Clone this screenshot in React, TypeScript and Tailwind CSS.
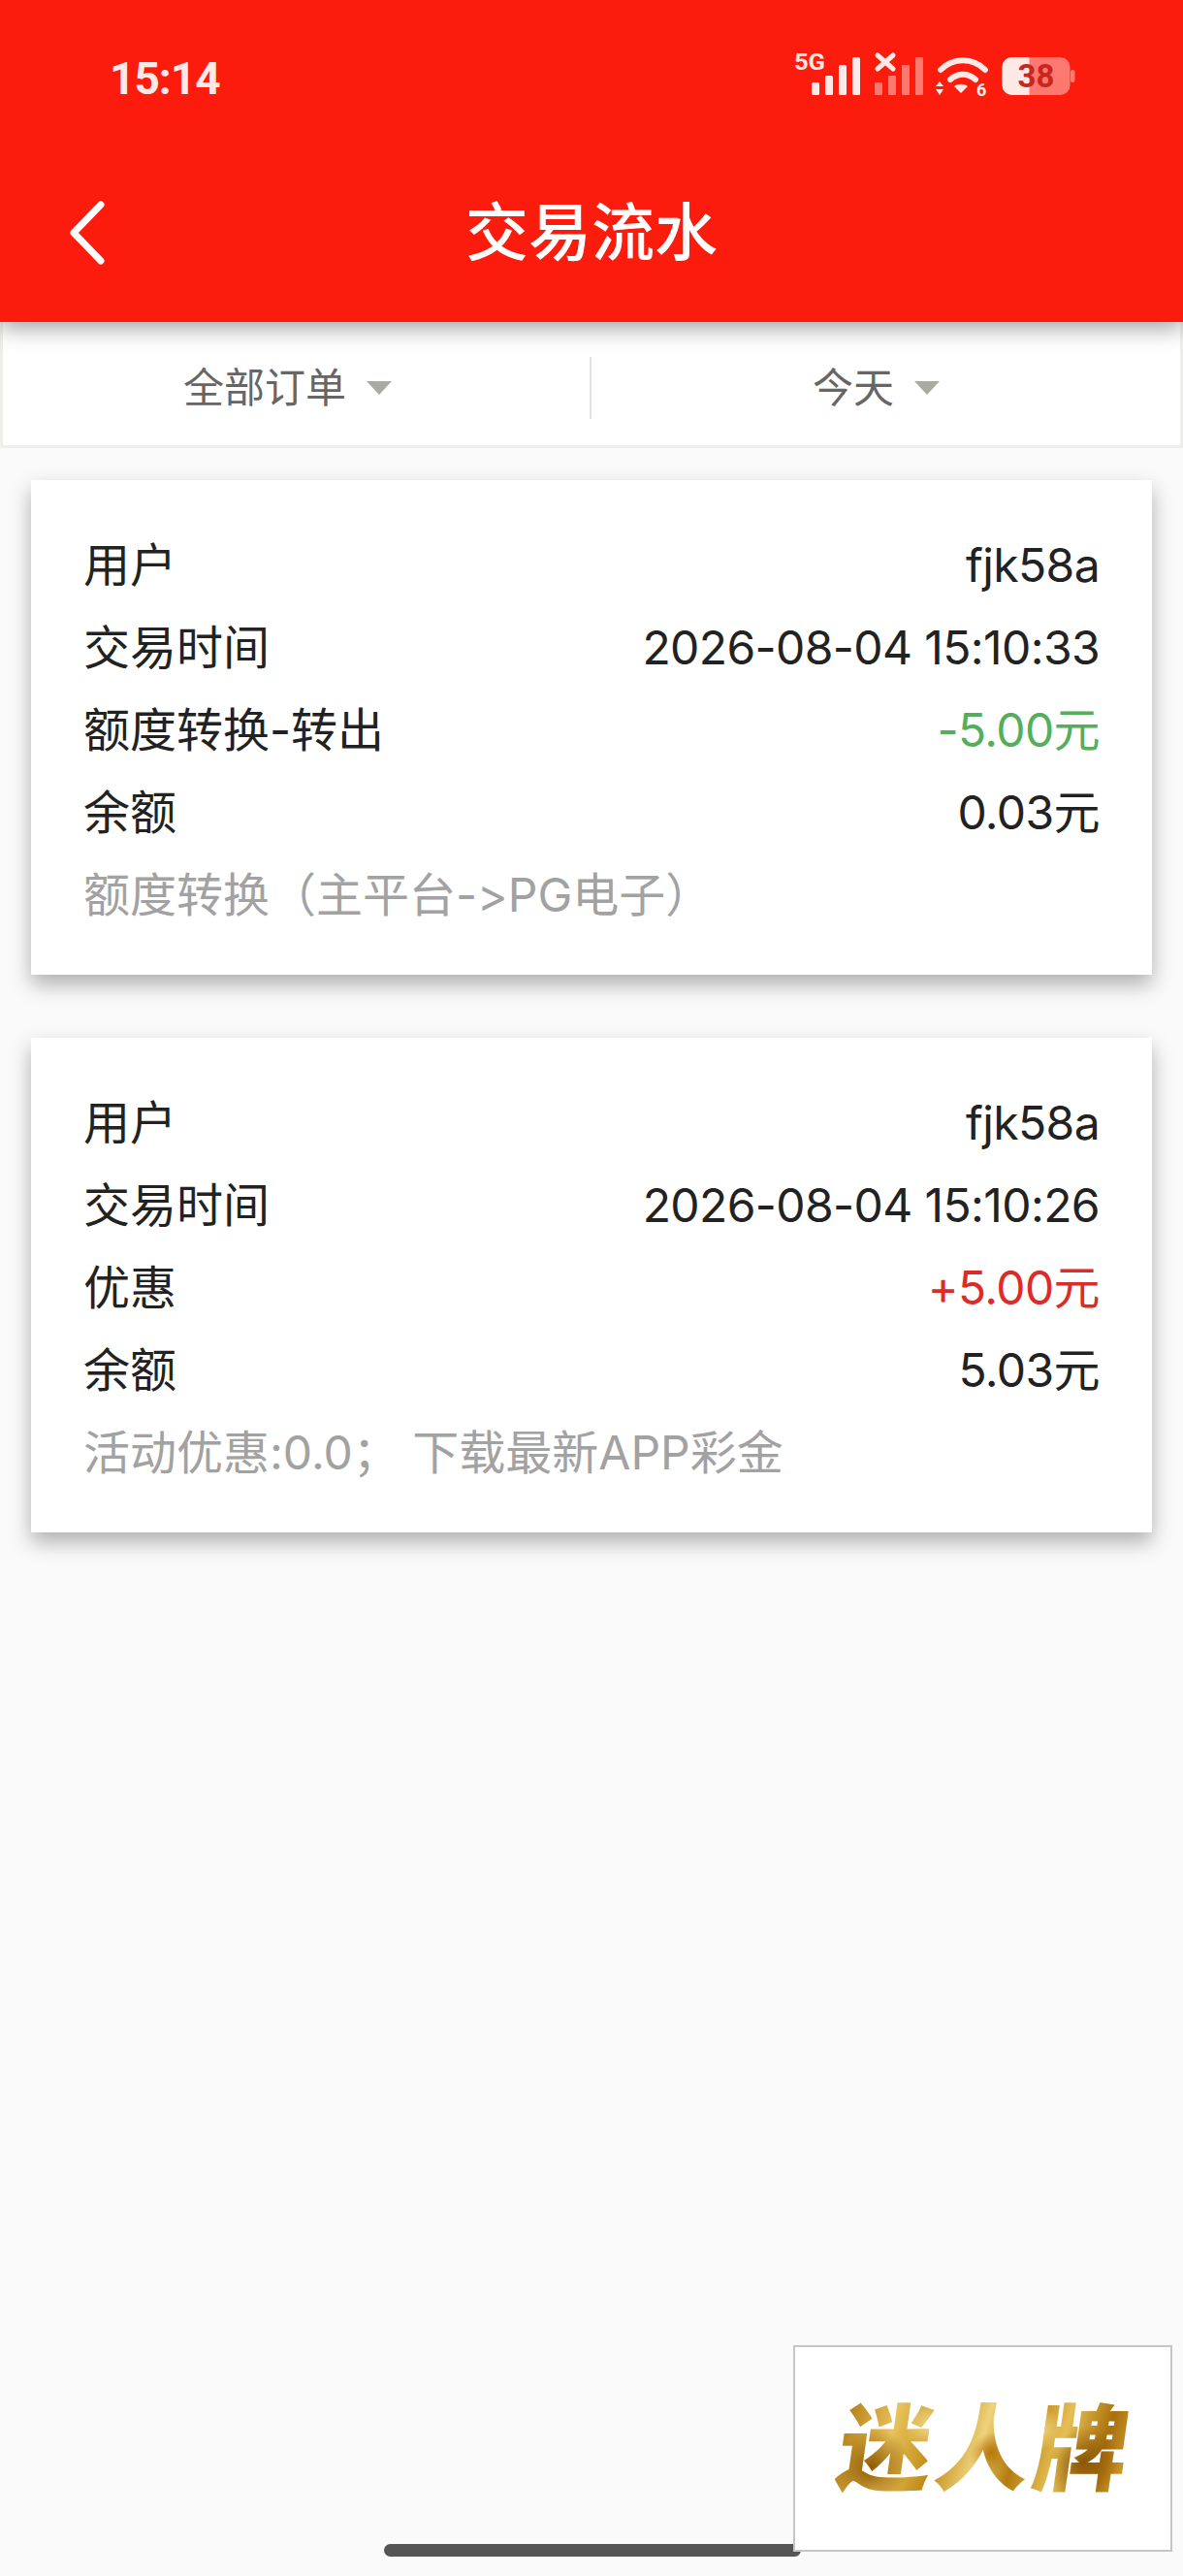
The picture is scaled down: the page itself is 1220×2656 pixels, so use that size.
type Row = { label: string; value: string; tone?: string };
type Txn = { rows: Row[]; note: string };

const txns: Txn[] = [
  {
    rows: [
      { label: '用户', value: 'fjk58a' },
      { label: '交易时间', value: '2026-08-04 15:10:33' },
      { label: '额度转换-转出', value: '-5.00元', tone: 'text-[#55ae5b]' },
      { label: '余额', value: '0.03元' },
    ],
    note: '额度转换（主平台->PG电子）',
  },
  {
    rows: [
      { label: '用户', value: 'fjk58a' },
      { label: '交易时间', value: '2026-08-04 15:10:26' },
      { label: '优惠', value: '+5.00元', tone: 'text-[#dc2c28]' },
      { label: '余额', value: '5.03元' },
    ],
    note: '活动优惠:0.0； 下载最新APP彩金',
  },
];

function StatusIcons() {
  return (
    <svg width="360" height="80" viewBox="0 0 360 80" fill="#ffe9e6">
      {/* 5G signal */}
      <text x="39" y="42" fontFamily="Roboto, sans-serif" fontWeight="700" fontSize="23" textLength="32" lengthAdjust="spacingAndGlyphs">5G</text>
      <rect x="57" y="55" width="8" height="13" rx="1.5" />
      <rect x="71" y="48" width="8" height="20" rx="1.5" />
      <rect x="85" y="37" width="8" height="31" rx="1.5" />
      <rect x="99" y="29" width="8" height="39" rx="1.5" />
      {/* second SIM, no service */}
      <g opacity="0.45">
        <rect x="122" y="55" width="8" height="13" rx="1" />
        <rect x="136" y="48" width="8" height="20" rx="1" />
        <rect x="150" y="37" width="8" height="31" rx="1" />
        <rect x="164" y="29" width="8" height="39" rx="1" />
      </g>
      <path d="M125 27l16 14M141 27l-16 14" stroke="#ffe9e6" strokeWidth="5" strokeLinecap="round" />
      {/* wifi 6 */}
      <g fill="none" stroke="#ffe9e6" strokeWidth="6" strokeLinecap="round">
        <path d="M190 42c13-13 33-13 46 0" />
        <path d="M200 52c8-7 18-7 26 0" />
      </g>
      <path d="M204 59c4-3 10-3 14 0l-7 7z" />
      <path d="M185 59l4-5 4 5zM185 62h8l-4 6z" />
      <text x="227" y="69" fontFamily="Roboto, sans-serif" fontWeight="700" fontSize="18">6</text>
      {/* battery */}
      <rect x="253.500" y="29" width="70" height="39" rx="10" fill="#ffe9e6" opacity="0.45" />
      <path d="M263.500 29h18v39h-18a10 10 0 0 1-10-10v-19a10 10 0 0 1 10-10z" />
      <rect x="324" y="42" width="4.500" height="13" rx="2" opacity="0.45" />
      <text x="288.500" y="60" textAnchor="middle" fontFamily="Roboto, sans-serif" fontWeight="700" fontSize="33" fill="#c8261e">38</text>
    </svg>
  );
}

function Filter({ label }: { label: string }) {
  return (
    <div className="flex flex-1 items-center justify-center gap-[21px] pr-[20px]">
      <span className="text-[42px] leading-none text-[#666]">{label}</span>
      <span className="h-0 w-0 border-x-[13px] border-t-[14px] border-x-transparent border-t-[#aaa9a3]" />
    </div>
  );
}

function TxnCard({ txn }: { txn: Txn }) {
  return (
    <div className="bg-white pt-[45px] pb-[40px] pl-[54px] pr-[54px] shadow-[0_10px_20px_rgba(0,0,0,0.3)]">
      {txn.rows.map((row) => (
        <div key={row.label} className="flex h-[85px] items-center justify-between text-[48px] text-[#222]">
          <span>{row.label}</span>
          <span className={`tracking-[-0.6px] ${row.tone ?? ''}`}>{row.value}</span>
        </div>
      ))}
      {/* calt off keeps Inter from joining -> into an arrow */}
      <div className="flex h-[85px] items-center whitespace-pre text-[48px] text-[#a2a2a2] [font-feature-settings:'calt'_0]">{txn.note}</div>
    </div>
  );
}

export default function App() {
  return (
    <div className="relative h-[2656px] w-[1220px] overflow-hidden bg-[#fafafa] font-['Inter','Noto_Sans_CJK_SC',sans-serif]">
      {/* red app bar with the status row on top */}
      <header className="relative z-10 h-[332px] bg-[#fc1c0e] shadow-[0_6px_22px_rgba(0,0,0,0.38)]">
        <div className="flex items-start justify-between pt-[30px] pl-[113px] pr-[80px]">
          <span className="mt-[28px] font-['Roboto',sans-serif] text-[46px] font-bold leading-none tracking-[-1px] text-[#ffe9e6]">15:14</span>
          <StatusIcons />
        </div>
        <div className="relative mt-[89px] flex h-[80px] items-center justify-center">
          <svg className="absolute left-[68px] top-[8px]" width="44" height="66" viewBox="0 0 44 66" fill="none" stroke="white" strokeWidth="7" strokeLinecap="round" strokeLinejoin="round">
            <path d="M36 4L8 33l28 29" />
          </svg>
          <h1 className="text-[65px] font-medium leading-none text-white">交易流水</h1>
        </div>
      </header>

      {/* order type and date filters */}
      <div className="flex h-[130px] items-center border-x-[3px] border-b-[3px] border-[#eeeeea] bg-white pt-[8px]">
        <Filter label="全部订单" />
        <div className="-ml-[2px] h-[64px] w-[2px] bg-[#e4e4e0]" />
        <Filter label="今天" />
      </div>

      <main className="flex flex-col gap-[65px] px-[32px] pt-[33px]">
        {txns.map((txn) => (
          <TxnCard key={txn.rows[1].value} txn={txn} />
        ))}
      </main>

      {/* home indicator */}
      <div className="absolute bottom-[20px] left-[396px] h-[13px] w-[430px] rounded-full bg-[#555]" />

      {/* floating brand badge */}
      <div className="absolute left-[818px] top-[2418px] flex h-[213px] w-[391px] items-center justify-center border-2 border-[#c6c6c6] bg-white pl-[6px]">
        <span className="skew-x-[-8deg] bg-[radial-gradient(circle_at_12%_70%,#8f5a05_0,transparent_14%),radial-gradient(circle_at_30%_25%,#f3dc8c_0,transparent_12%),radial-gradient(circle_at_52%_55%,#b5760a_0,transparent_13%),radial-gradient(circle_at_68%_30%,#f0d47a_0,transparent_10%),radial-gradient(circle_at_84%_65%,#8a5606_0,transparent_14%),linear-gradient(100deg,#b07a10_0%,#e8c25a_18%,#c08a18_34%,#efd37c_48%,#b57c0e_60%,#e5bf55_74%,#a9700c_88%,#d7a838_100%)] bg-clip-text text-[97px] font-black leading-none tracking-[4px] text-transparent">
          迷人牌
        </span>
      </div>
    </div>
  );
}
